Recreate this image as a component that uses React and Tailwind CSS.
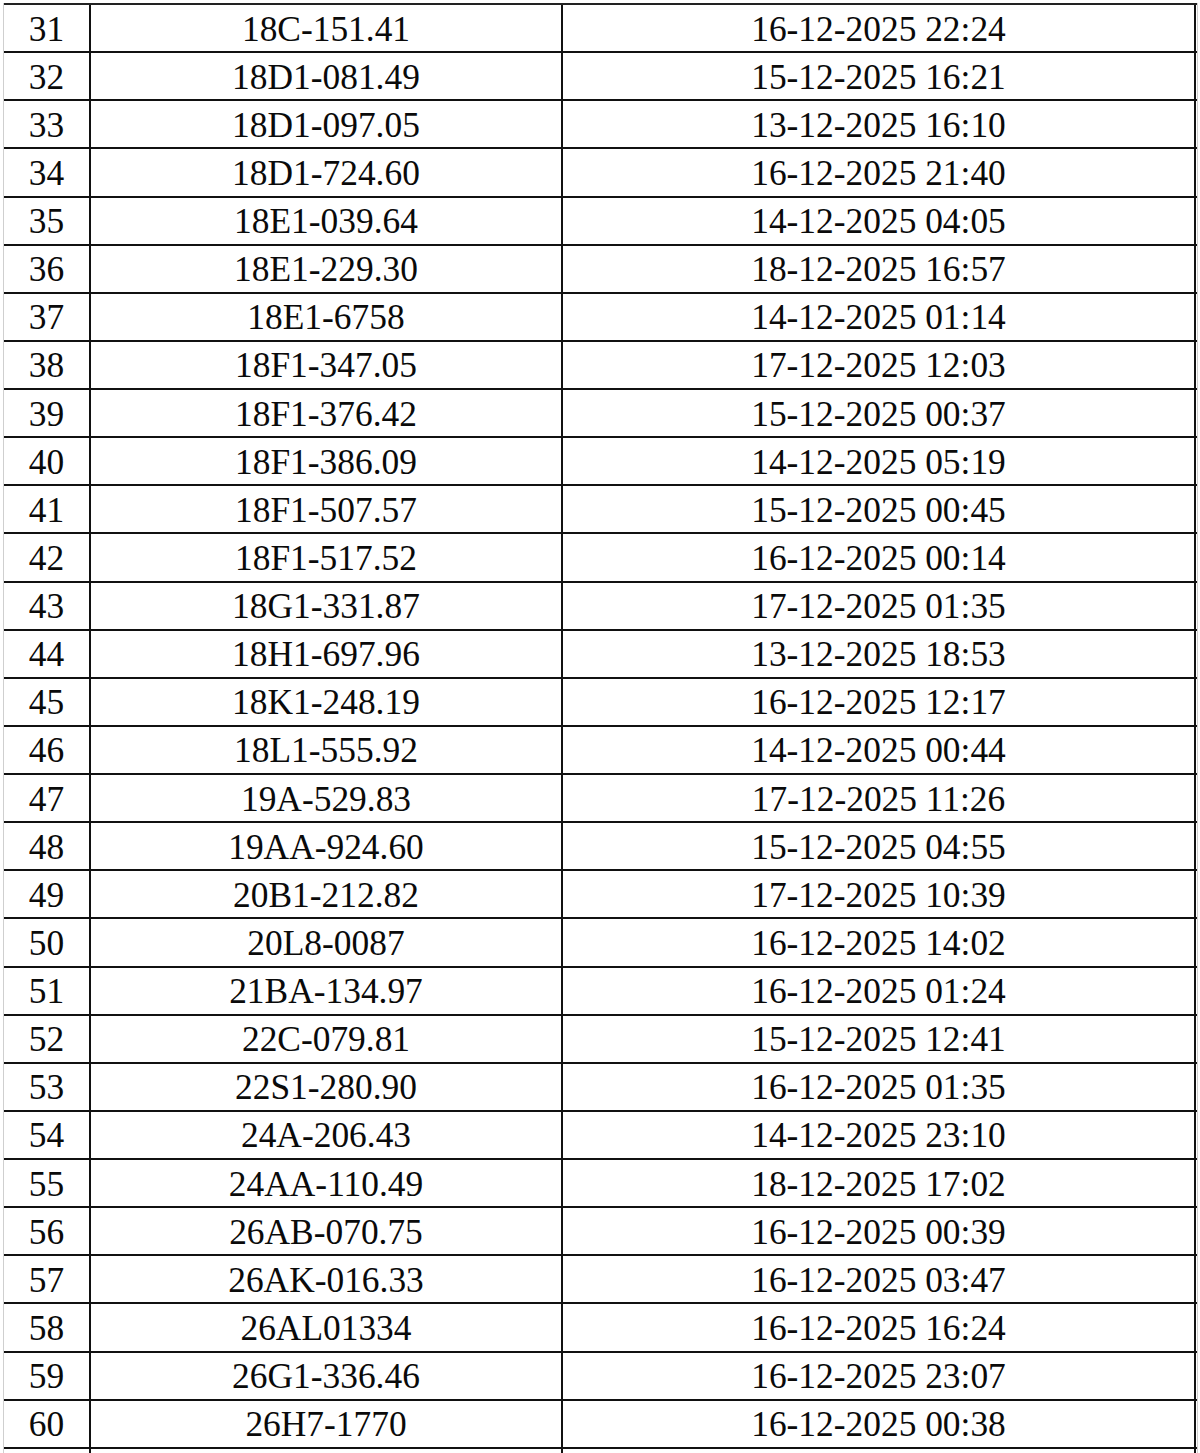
import React from 'react'

const rows = [
  ['31', '18C-151.41', '16-12-2025 22:24'],
  ['32', '18D1-081.49', '15-12-2025 16:21'],
  ['33', '18D1-097.05', '13-12-2025 16:10'],
  ['34', '18D1-724.60', '16-12-2025 21:40'],
  ['35', '18E1-039.64', '14-12-2025 04:05'],
  ['36', '18E1-229.30', '18-12-2025 16:57'],
  ['37', '18E1-6758', '14-12-2025 01:14'],
  ['38', '18F1-347.05', '17-12-2025 12:03'],
  ['39', '18F1-376.42', '15-12-2025 00:37'],
  ['40', '18F1-386.09', '14-12-2025 05:19'],
  ['41', '18F1-507.57', '15-12-2025 00:45'],
  ['42', '18F1-517.52', '16-12-2025 00:14'],
  ['43', '18G1-331.87', '17-12-2025 01:35'],
  ['44', '18H1-697.96', '13-12-2025 18:53'],
  ['45', '18K1-248.19', '16-12-2025 12:17'],
  ['46', '18L1-555.92', '14-12-2025 00:44'],
  ['47', '19A-529.83', '17-12-2025 11:26'],
  ['48', '19AA-924.60', '15-12-2025 04:55'],
  ['49', '20B1-212.82', '17-12-2025 10:39'],
  ['50', '20L8-0087', '16-12-2025 14:02'],
  ['51', '21BA-134.97', '16-12-2025 01:24'],
  ['52', '22C-079.81', '15-12-2025 12:41'],
  ['53', '22S1-280.90', '16-12-2025 01:35'],
  ['54', '24A-206.43', '14-12-2025 23:10'],
  ['55', '24AA-110.49', '18-12-2025 17:02'],
  ['56', '26AB-070.75', '16-12-2025 00:39'],
  ['57', '26AK-016.33', '16-12-2025 03:47'],
  ['58', '26AL01334', '16-12-2025 16:24'],
  ['59', '26G1-336.46', '16-12-2025 23:07'],
  ['60', '26H7-1770', '16-12-2025 00:38'],
]

const App = () => {
  return (
    <div className="bg-white w-[1200px] h-[1453px] overflow-hidden pt-[3px]">
      <div className="ml-[3px] w-[1195px] border-l border-r border-[#cfcfcf] font-['Liberation_Serif',serif] text-[35.4px] text-[#0a0a0a]">
        <div className="border-t-2 border-[#222]">
          {rows.map((r, i) => (
            <div key={i} className="flex h-[48.13px] border-b-2 border-[#111]">
              <div className="w-[87px] pt-[2px] border-r-2 border-[#111] flex items-center justify-center">{r[0]}</div>
              <div className="w-[472px] pt-[2px] border-r-2 border-[#111] flex items-center justify-center">{r[1]}</div>
              <div className="w-[633px] pt-[2px] border-r-2 border-[#111] flex items-center justify-center">{r[2]}</div>
            </div>
          ))}
          <div className="flex h-[40px]">
            <div className="w-[87px] border-r-2 border-[#111]"></div>
            <div className="w-[472px] border-r-2 border-[#111]"></div>
            <div className="w-[633px] border-r-2 border-[#111]"></div>
          </div>
        </div>
      </div>
    </div>
  )
}

export default App
